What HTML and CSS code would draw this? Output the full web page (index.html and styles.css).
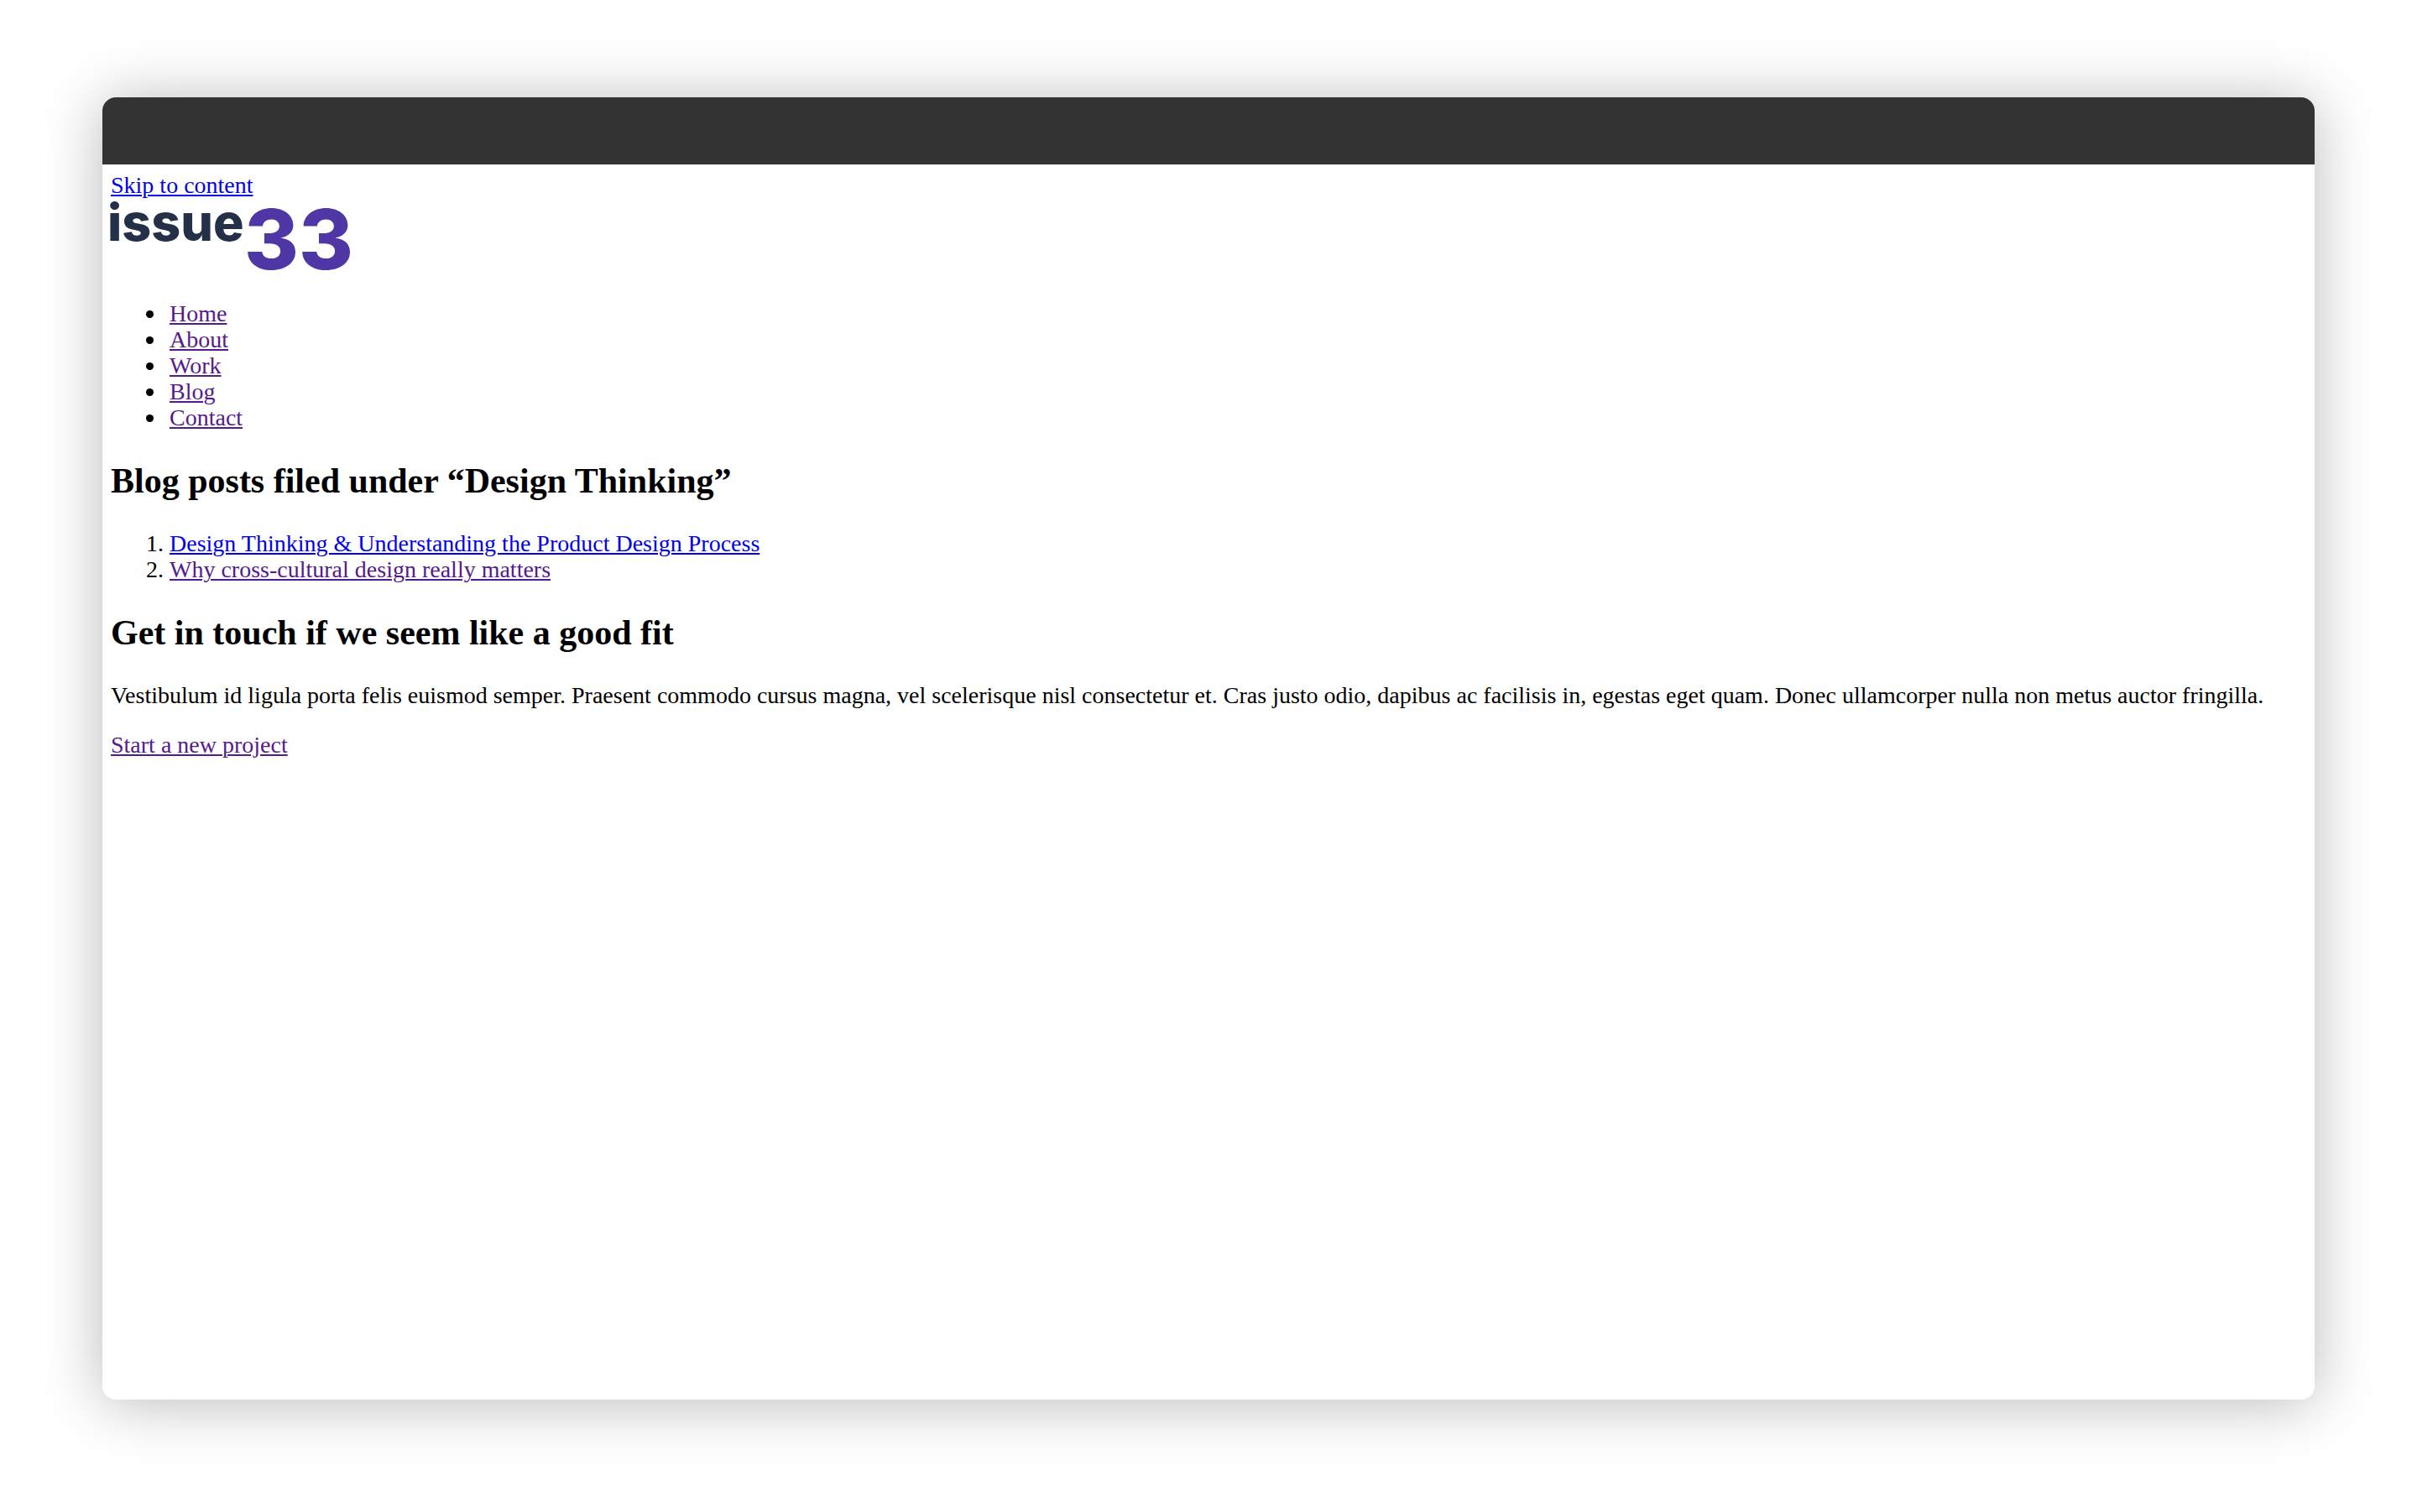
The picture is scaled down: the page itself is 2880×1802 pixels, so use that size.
FILE: index.html
```html
<!DOCTYPE html>
<html lang="en">
<head>
<meta charset="utf-8">
<meta name="viewport" content="width=device-width, initial-scale=1">
<title>Design Thinking – issue33</title>
<link rel="stylesheet" href="styles.css">
</head>
<body>
<div class="window">
  <div class="titlebar"></div>
  <div class="page">
    <a class="link skip" href="#content">Skip to content</a>
    <header>
      <svg class="logo" viewBox="0 0 300 94" role="img" aria-label="issue33">
        <text class="logo-word" x="-4" y="51">issue</text>
        <text class="logo-number" x="159" y="85">33</text>
      </svg>
      <nav>
        <ul class="list bullets">
          <li><a class="link visited" href="#home">Home</a></li>
          <li><a class="link visited" href="#about">About</a></li>
          <li><a class="link visited" href="#work">Work</a></li>
          <li><a class="link visited" href="#blog">Blog</a></li>
          <li><a class="link visited" href="#contact">Contact</a></li>
        </ul>
      </nav>
    </header>
    <main id="content">
      <h2 class="heading">Blog posts filed under “Design Thinking”</h2>
      <ol class="list">
        <li><a class="link" href="#design-thinking">Design Thinking &amp; Understanding the Product Design Process</a></li>
        <li><a class="link visited" href="#cross-cultural">Why cross-cultural design really matters</a></li>
      </ol>
    </main>
    <footer>
      <h2 class="heading">Get in touch if we seem like a good fit</h2>
      <p class="text">Vestibulum id ligula porta felis euismod semper. Praesent commodo cursus magna, vel scelerisque nisl consectetur et. Cras justo odio, dapibus ac facilisis in, egestas eget quam. Donec ullamcorper nulla non metus auctor fringilla.</p>
      <a class="link visited" href="#start">Start a new project</a>
    </footer>
  </div>
</div>
</body>
</html>
```
FILE: styles.css
```css
* {
  box-sizing: border-box;
}

body {
  display: flex;
  min-height: 100vh;
  margin: 0;
  padding: 116px 122px 134px;
  background: #fff;
  color: #000;
  font: 28px/31px "Liberation Serif", "Times New Roman", serif;
}

.window {
  flex: 1;
  min-width: 0;
  overflow: hidden;
  border-radius: 16px;
  background: #fff;
  box-shadow: 0 4px 72px rgba(0, 0, 0, 0.28);
}

.titlebar {
  height: 80px;
  background: #333;
}

.page {
  padding: 9px 10px;
}

.link {
  color: #0000ee;
  text-decoration: underline;
  text-decoration-thickness: 2px;
  text-underline-offset: 2px;
}

.visited {
  color: #551a8b;
}

.skip {
  display: block;
}

.logo {
  display: block;
  width: 300px;
  height: 94px;
  overflow: visible;
  font-family: Inter, sans-serif;
  font-weight: 800;
}

.logo-word {
  fill: #243048;
  font-size: 61px;
}

.logo-number {
  fill: #4f38a5;
  font-size: 99px;
}

.list {
  margin: 28px 0 36px;
  padding-left: 70px;
}

.bullets {
  list-style: none;
}

.bullets li {
  display: flex;
}

.bullets li::before {
  content: "";
  width: 9px;
  height: 9px;
  margin: 12px 19px 0 -28px;
  border-radius: 50%;
  background: #000;
}

.heading {
  margin: 36px 0 35px;
  font-size: 42px;
  line-height: 48px;
}

.text {
  margin: 0 0 28px;
}
```
